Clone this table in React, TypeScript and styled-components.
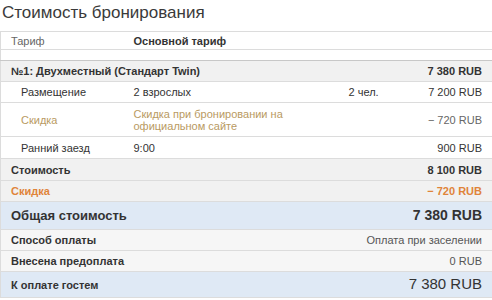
import React from 'react';
import styled, { createGlobalStyle } from 'styled-components';

const colors = {
  text: '#333333',
  muted: '#555555',
  border: '#dcdcdc',
  borderDark: '#c8c8c8',
  gray: '#f1f1f1',
  light: '#f6f6f6',
  blue: '#dfe9f5',
  promo: '#b99a62',
  orange: '#e0843a',
};

const GlobalStyle = createGlobalStyle`
  html, body {
    margin: 0;
    padding: 0;
    background: #ffffff;
  }
  body {
    font-family: "Liberation Sans", Arial, sans-serif;
    color: ${colors.text};
  }
`;

const Page = styled.div`
  width: 492px;
  padding-top: 3px;
`;

const Title = styled.h2`
  margin: 0 0 8px 2px;
  font-size: 17px;
  font-weight: normal;
  line-height: 20px;
  color: #3a3a3a;
`;

const Table = styled.table`
  width: 492px;
  table-layout: fixed;
  border-collapse: collapse;
  font-size: 11px;
  line-height: 12px;
  border-left: 1px solid ${colors.border};
`;

type RowTone = 'plain' | 'gray' | 'light' | 'blue';

const toneBg: Record<RowTone, string> = {
  plain: '#ffffff',
  gray: colors.gray,
  light: colors.light,
  blue: colors.blue,
};

const Row = styled.tr<{ $tone?: RowTone; $strong?: boolean; $edge?: boolean }>`
  background: ${(p) => toneBg[p.$tone || 'plain']};
  font-weight: ${(p) => (p.$strong ? 'bold' : 'normal')};
  border-top: 1px solid ${(p) => (p.$edge ? colors.borderDark : colors.border)};
  border-bottom: 1px solid ${colors.border};
`;

const Cell = styled.td<{ $indent?: boolean; $right?: boolean; $h?: number }>`
  padding: 0 10px 0 ${(p) => (p.$indent ? 20 : 10)}px;
  height: ${(p) => p.$h || 20}px;
  text-align: ${(p) => (p.$right ? 'right' : 'left')};
  vertical-align: middle;
  white-space: nowrap;
`;

const Spacer = styled.tr`
  height: 11px;
  td {
    padding: 0;
  }
`;

const Promo = styled.span`
  color: ${colors.promo};
  white-space: normal;
  display: inline-block;
  max-width: 175px;
`;

const Muted = styled.span`
  color: #666666;
`;

const Orange = styled.span`
  color: ${colors.orange};
`;

const Label = styled.span`
  font-size: 13px;
  font-weight: bold;
`;

const Total = styled.span<{ $bold?: boolean }>`
  font-size: ${(p) => (p.$bold ? 14 : 15)}px;
  font-weight: ${(p) => (p.$bold ? 'bold' : 'normal')};
`;

const Small = styled.span`
  font-weight: normal;
  color: ${colors.muted};
`;

export default function App() {
  return (
    <Page>
      <GlobalStyle />
      <Title>Стоимость бронирования</Title>
      <Table>
        <colgroup>
          <col style={{ width: 123 }} />
          <col style={{ width: 215 }} />
          <col style={{ width: 50 }} />
          <col />
        </colgroup>
        <tbody>
          <Row>
            <Cell $h={17}>
              <Muted>Тариф</Muted>
            </Cell>
            <Cell colSpan={3} $h={17}>
              <b>Основной тариф</b>
            </Cell>
          </Row>
          <Spacer>
            <td colSpan={4} />
          </Spacer>
          <Row $tone="gray" $strong $edge>
            <Cell colSpan={3}>№1: Двухместный (Стандарт Twin)</Cell>
            <Cell $right>7 380 RUB</Cell>
          </Row>
          <Row>
            <Cell $indent>Размещение</Cell>
            <Cell>2 взрослых</Cell>
            <Cell>2 чел.</Cell>
            <Cell $right>7 200 RUB</Cell>
          </Row>
          <Row>
            <Cell $indent $h={33}>
              <Promo>Скидка</Promo>
            </Cell>
            <Cell colSpan={2} $h={33}>
              <Promo>Скидка при бронировании на официальном сайте</Promo>
            </Cell>
            <Cell $right $h={33}>
              <Muted>− 720 RUB</Muted>
            </Cell>
          </Row>
          <Row>
            <Cell $indent $h={21}>Ранний заезд</Cell>
            <Cell colSpan={2} $h={21}>9:00</Cell>
            <Cell $right $h={21}>900 RUB</Cell>
          </Row>
          <Row $tone="gray" $strong $edge>
            <Cell colSpan={3} $h={21}>Стоимость</Cell>
            <Cell $right $h={21}>8 100 RUB</Cell>
          </Row>
          <Row $tone="gray" $strong>
            <Cell colSpan={3}>
              <Orange>Скидка</Orange>
            </Cell>
            <Cell $right>
              <Orange>− 720 RUB</Orange>
            </Cell>
          </Row>
          <Row $tone="blue" $strong>
            <Cell colSpan={3} $h={27}>
              <Label>Общая стоимость</Label>
            </Cell>
            <Cell $right $h={27}>
              <Total $bold>7 380 RUB</Total>
            </Cell>
          </Row>
          <Row $tone="light" $strong>
            <Cell colSpan={2}>Способ оплаты</Cell>
            <Cell colSpan={2} $right>
              <Small>Оплата при заселении</Small>
            </Cell>
          </Row>
          <Row $tone="light" $strong>
            <Cell colSpan={2}>Внесена предоплата</Cell>
            <Cell colSpan={2} $right>
              <Small>0 RUB</Small>
            </Cell>
          </Row>
          <Row $tone="blue" $strong>
            <Cell colSpan={3} $h={25}>
              К оплате гостем
            </Cell>
            <Cell $right $h={25}>
              <Total>7 380 RUB</Total>
            </Cell>
          </Row>
        </tbody>
      </Table>
    </Page>
  );
}
